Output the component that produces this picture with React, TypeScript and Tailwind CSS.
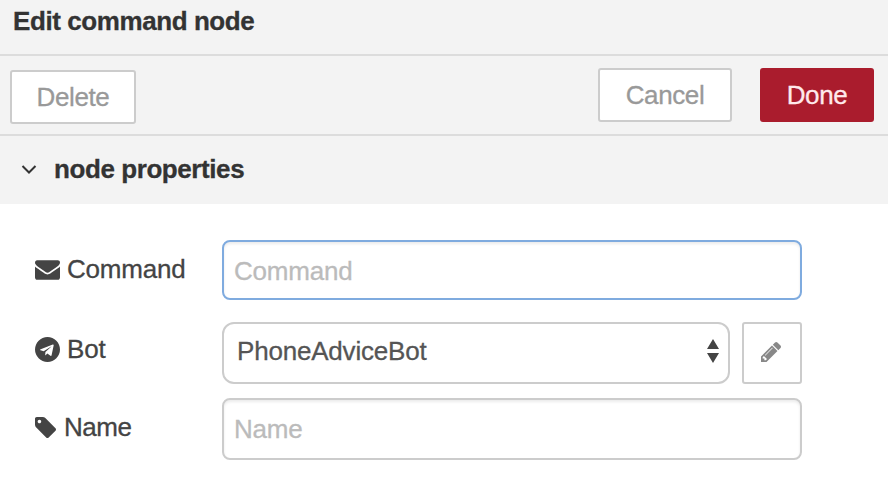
import type { ReactNode } from "react";

const ICONS = {
  envelope: {
    box: "0 256 1792 1408",
    d: "M1792 710v794q0 66-47 113t-113 47h-1472q-66 0-113-47t-47-113v-794q44 49 101 87 362 246 497 345 57 42 92.500 65.500t94.500 48 110 24.500h2q51 0 110-24.500t94.500-48 92.500-65.500q170-123 498-345 57-39 100-87zm0-294q0 79-49 151t-122 123q-376 261-468 325-10 7-42.500 31t-54 38.500-52 32.500-57.500 27-50 9h-2q-23 0-50-9t-57.500-27-52-32.500-54-38.500-42.500-31q-91-64-262-182.500t-205-142.500q-62-42-117-115.500t-55-136.500q0-78 41.500-130t118.500-52h1472q65 0 112.500 47t47.500 113z",
  },
  telegram: {
    box: "0 0 1792 1792",
    d: "M1189 1307l147-693q9-44-10.500-63t-51.500-7l-864 333q-29 11-39.500 25t-2.500 26.500 32 19.500l221 69 513-323q21-14 32-6 7 5-4 15l-415 375-16 228q23 0 45-22l108-104 224 165q64 36 81-38zm603-411q0 182-71 348t-191 286-286 191-348 71-348-71-286-191-191-286-71-348 71-348 191-286 286-191 348-71 348 71 286 191 191 286 71 348z",
  },
  tag: {
    box: "128 128 1515 1515",
    d: "M576 448q0-53-37.500-90.500t-90.500-37.500-90.500 37.500-37.500 90.500 37.500 90.500 90.500 37.500 90.500-37.500 37.500-90.500zm1067 576q0 53-37 90l-491 492q-39 37-91 37-53 0-90-37l-715-716q-38-37-64.500-101t-26.500-117v-416q0-52 38-90t90-38h416q53 0 117 26.500t102 64.500l715 714q37 39 37 91z",
  },
  pencil: {
    box: "128 149 1515 1515",
    d: "M491 1536l91-91-235-235-91 91v107h128v128h107zm523-928q0-22-22-22-10 0-17 7l-542 542q-7 7-7 17 0 22 22 22 10 0 17-7l542-542q7-7 7-17zm-54-192l416 416-832 832h-416v-416zm683 96q0 53-37 90l-166 166-416-416 166-165q36-38 90-38 53 0 91 38l235 234q37 39 37 91z",
  },
};

function Icon({ name, className }: { name: keyof typeof ICONS; className: string }) {
  return (
    <svg viewBox={ICONS[name].box} className={className} fill="currentColor" aria-hidden="true">
      <path d={ICONS[name].d} />
    </svg>
  );
}

function Label({ icon, className, children }: { icon: ReactNode; className: string; children: ReactNode }) {
  return (
    <label className={`flex w-[187px] shrink-0 items-center text-[#444] ${className}`}>
      {icon}
      {children}
    </label>
  );
}

const inputClass =
  "w-[580px] rounded-lg border-2 bg-white pl-[10px] text-[26px] tracking-[-0.2px] text-[#555] shadow-[inset_0_2px_3px_rgba(0,0,0,0.08)] outline-none placeholder:text-[#bbb]";

export default function App() {
  return (
    <div className="flex h-[492px] w-[888px] flex-col overflow-hidden bg-white font-['Liberation_Sans',Arial,sans-serif] text-[26px] leading-[30px] tracking-[-0.2px] [-webkit-text-stroke:0.3px]">
      <header className="h-14 border-b-2 border-[#dcdcdc] bg-[#f3f3f3] pt-[6px] pl-[13px] font-bold tracking-[-0.42px] text-[#333]">
        Edit command node
      </header>
      <div className="flex h-20 items-start border-b-2 border-[#dcdcdc] bg-[#f3f3f3] pr-[14px] pl-[10px]">
        <button className="mt-[14px] h-[54px] w-[126px] rounded-[3px] border-2 border-[#ccc] bg-white tracking-[-0.4px] text-[#999]">
          Delete
        </button>
        <button className="mt-3 ml-auto h-[54px] w-[134px] rounded-[3px] border-2 border-[#ccc] bg-white tracking-[-0.4px] text-[#999]">
          Cancel
        </button>
        <button className="mt-3 ml-7 h-[54px] w-[114px] rounded-[3px] bg-[#aa1c2d] tracking-[-0.4px] text-[#ffe9ec]">
          Done
        </button>
      </div>
      <div className="flex h-[68px] items-center bg-[#f3f3f3] pb-[2px] pl-[21px] font-bold tracking-[-0.42px] text-[#333]">
        <svg viewBox="0 0 16 10" className="mr-[17px] h-[10px] w-4" fill="none" stroke="#333" strokeWidth="2">
          <path d="M1.500 2 8 8.500l6.500-6.500" />
        </svg>
        node properties
      </div>
      <main className="flex flex-col pt-9 pl-[35px]">
        <div className="flex h-[60px]">
          <Label className="pb-[2px]" icon={<Icon name="envelope" className="mt-[2px] mr-[7px] h-5 w-[25px]" />}>
            Command
          </Label>
          <input placeholder="Command" className={`${inputClass} h-[60px] border-[#7fabdf] pt-[2px]`} />
        </div>
        <div className="mt-[22px] flex h-[62px]">
          <Label className="pb-2" icon={<Icon name="telegram" className="mr-[7px] h-[25px] w-[25px]" />}>
            Bot
          </Label>
          <div className="flex w-[508px] items-center justify-between rounded-xl border-2 border-[#ccc] bg-white pr-[9px] pb-1 pl-[13px] text-[#555]">
            PhoneAdviceBot
            <svg viewBox="0 0 12 24" className="h-6 w-3" fill="#444">
              <path d="M6 0l6 10H0zM6 24 0 14h12z" />
            </svg>
          </div>
          <button className="ml-3 flex w-[60px] items-center justify-center rounded-[3px] border-2 border-[#ccc] bg-white pr-[2px] pb-[2px] text-[#888]">
            <Icon name="pencil" className="h-5 w-5" />
          </button>
        </div>
        <div className="mt-[14px] flex h-[62px]">
          <Label className="pb-1 tracking-[-0.5px]" icon={<Icon name="tag" className="mr-2 h-[21px] w-[21px]" />}>
            Name
          </Label>
          <input placeholder="Name" className={`${inputClass} h-[62px] border-[#ccc]`} />
        </div>
      </main>
    </div>
  );
}
